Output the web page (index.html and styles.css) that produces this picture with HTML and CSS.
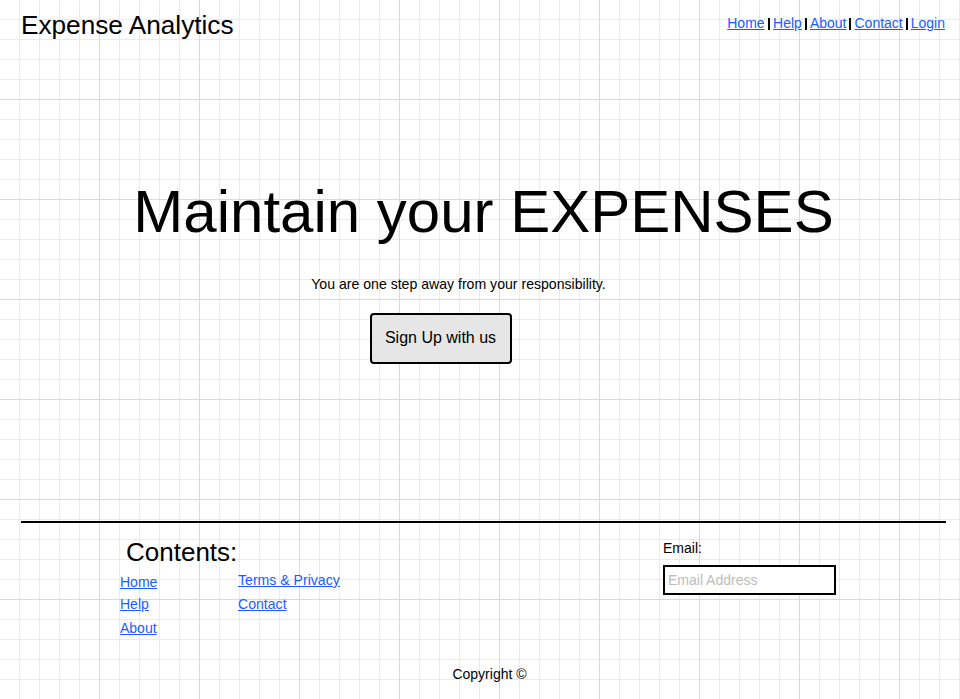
FILE: index.html
```html
<!DOCTYPE html>
<html lang="en">
<head>
<meta charset="utf-8">
<title>Expense Analytics</title>
<link rel="stylesheet" href="styles.css">
</head>
<body>
<div class="page">
  <header class="header">
    <div class="brand">Expense Analytics</div>
    <nav class="nav">
      <a href="#">Home</a><span class="sep"></span><a href="#">Help</a><span class="sep"></span><a href="#">About</a><span class="sep"></span><a href="#">Contact</a><span class="sep"></span><a href="#">Login</a>
    </nav>
  </header>

  <section class="hero">
    <h1 class="hero-title">Maintain your EXPENSES</h1>
    <p class="hero-sub">You are one step away from your responsibility.</p>
    <button class="signup" type="button">Sign Up with us</button>
  </section>

  <footer class="footer">
    <div class="footer-main">
      <div class="contents">
        <h2 class="contents-title">Contents:</h2>
        <div class="link-cols">
          <div class="link-col col-a">
            <a class="home-link" href="#">Home</a>
            <a href="#">Help</a>
            <a class="about-link" href="#">About</a>
          </div>
          <div class="link-col col-b">
            <a href="#">Terms &amp; Privacy</a>
            <a href="#">Contact</a>
          </div>
        </div>
      </div>
      <div class="subscribe">
        <label class="email-label" for="email">Email:</label>
        <input class="email-input" id="email" type="text" placeholder="Email Address">
      </div>
    </div>
    <p class="copyright">Copyright &copy;</p>
  </footer>
</div>
</body>
</html>
```

FILE: styles.css
```css
html, body {
  margin: 0;
  padding: 0;
}

body {
  font-family: "Liberation Sans", Arial, sans-serif;
  color: #000;
  min-height: 699px;
  background-color: #fff;
  background-image:
    linear-gradient(to right, transparent 99px, #d9d9d9 99px, #d9d9d9 100px, transparent 100px),
    linear-gradient(to bottom, transparent 99px, #d9d9d9 99px, #d9d9d9 100px, transparent 100px),
    linear-gradient(to right, transparent 19px, #ebebeb 19px, #ebebeb 20px, transparent 20px),
    linear-gradient(to bottom, transparent 19px, #ebebeb 19px, #ebebeb 20px, transparent 20px);
  background-size: 100px 100px, 100px 100px, 20px 20px, 20px 20px;
}

a {
  color: #1a5cff;
}

.page {
  margin: 0 14px 0 21px;
}

/* Header */
.header {
  display: flex;
  justify-content: space-between;
  align-items: flex-start;
  padding-top: 10px;
}

.brand {
  font-size: 26.2px;
  line-height: 30px;
}

.nav {
  margin-top: 5px;
  margin-right: 1px;
  font-size: 14px;
  line-height: 16px;
  display: flex;
  align-items: center;
}

.sep {
  display: inline-block;
  width: 2px;
  height: 12px;
  background: #000;
  margin: 2px 3px 0 3px;
}

.sep:first-of-type {
  margin-left: 3.5px;
}

/* Hero */
.hero {
  display: flex;
  flex-direction: column;
  align-items: center;
}

.hero-title {
  margin: 137px 0 0 0;
  font-size: 60px;
  line-height: 69px;
  font-weight: normal;
}

.hero-sub {
  margin: 30px 50px 0 0;
  font-size: 14.1px;
  line-height: 16px;
}

.signup {
  margin: 21px 86px 0 0;
  width: 142px;
  height: 51px;
  border: 2px solid #000;
  border-radius: 4px;
  background: #e6e6e6;
  font-family: "Liberation Sans", Arial, sans-serif;
  font-size: 16px;
  line-height: 18px;
  color: #000;
  padding: 0 0 2px 0;
}

/* Footer */
.footer {
  margin-top: 157px;
  border-top: 2px solid #000;
}

.footer-main {
  display: flex;
  align-items: flex-start;
  padding-left: 99px;
}

.contents {
  width: 543px;
  padding-top: 14px;
}

.contents-title {
  margin: 0 0 0 6px;
  font-size: 26px;
  line-height: 30px;
  font-weight: normal;
}

.link-cols {
  display: flex;
  font-size: 14px;
  line-height: 16px;
}

.link-col {
  display: flex;
  flex-direction: column;
}

.col-a {
  width: 118px;
  margin-top: 7px;
}

.col-a .home-link {
  margin-bottom: 6px;
}

.col-a .about-link {
  margin-top: 8px;
}

.col-b {
  margin-top: 5px;
  gap: 8px;
  font-size: 14.1px;
}

.subscribe {
  padding-top: 17px;
  display: flex;
  flex-direction: column;
  align-items: flex-start;
}

.email-label {
  font-size: 14px;
  line-height: 16px;
}

.email-input {
  margin-top: 9px;
  width: 173px;
  height: 30px;
  box-sizing: border-box;
  border: 2px solid #000;
  background: #fff;
  padding: 0 3px;
  font-family: "Liberation Sans", Arial, sans-serif;
  font-size: 14px;
  outline: none;
}

.email-input::placeholder {
  color: #bdbdbd;
}

.copyright {
  margin: 30px 0 0 12px;
  text-align: center;
  font-size: 14px;
  line-height: 16px;
}
```
